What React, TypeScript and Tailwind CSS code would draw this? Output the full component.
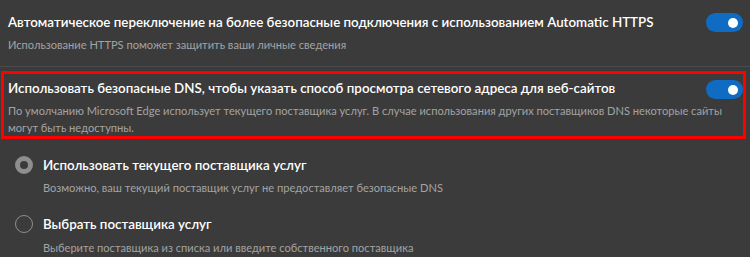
import React from "react";

function Toggle() {
  return (
    <div className="w-[37px] h-[19px] rounded-full bg-[#0f6cc2] flex items-center justify-end pr-[5px] shrink-0">
      <div className="w-[10px] h-[10px] rounded-full bg-white" />
    </div>
  );
}

const titleCls = "text-[13.35px] leading-[20px] font-semibold text-white whitespace-nowrap";
const subCls = "text-[11.1px] text-[#a3a3a3]";

export default function App() {
  return (
    <div className="w-[750px] h-[257px] bg-[#3b3b3b] overflow-hidden font-['Lato','Open_Sans',sans-serif]">
      <div className="h-[67px] border-b border-[#4b4b4b] pl-[8px] pr-[7px] pt-[12px] flex justify-between">
        <div>
          <div className={titleCls}>
            Автоматическое переключение на более безопасные подключения с использованием Automatic HTTPS
          </div>
          <div className={"mt-[4px] leading-[18px] " + subCls}>
            Использование HTTPS поможет защитить ваши личные сведения
          </div>
        </div>
        <div className="pt-[1px]">
          <Toggle />
        </div>
      </div>
      <div className="mt-[4px] mx-[1px] w-[745px] h-[68px] border-[3px] border-[#ff0000] pl-[4px] pt-[4px] flex justify-between">
        <div>
          <div className={titleCls}>
            Использовать безопасные DNS, чтобы указать способ просмотра сетевого адреса для веб-сайтов
          </div>
          <div className={"mt-[4px] leading-[17px] w-[725px] " + subCls}>
            По умолчанию Microsoft Edge использует текущего поставщика услуг. В случае использования других поставщиков DNS некоторые сайты могут быть недоступны.
          </div>
        </div>
        <div className="pt-[2px] -ml-[40px]">
          <Toggle />
        </div>
      </div>
      <div className="pl-[15px] pt-[16px]">
        <div className="flex items-center gap-[10px] h-[20px]">
          <div className="w-[18px] h-[18px] rounded-full border-[5px] border-[#8e8e8e] bg-[#3b3b3b]" />
          <div className={titleCls}>Использовать текущего поставщика услуг</div>
        </div>
        <div className={"ml-[28px] mt-[4px] leading-[18px] " + subCls}>
          Возможно, ваш текущий поставщик услуг не предоставляет безопасные DNS
        </div>
        <div className="flex items-center gap-[10px] h-[20px] mt-[17px]">
          <div className="w-[18px] h-[18px] rounded-full border border-[#8e8e8e]" />
          <div className={titleCls}>Выбрать поставщика услуг</div>
        </div>
        <div className={"ml-[28px] mt-[5px] leading-[18px] " + subCls}>
          Выберите поставщика из списка или введите собственного поставщика
        </div>
      </div>
    </div>
  );
}
